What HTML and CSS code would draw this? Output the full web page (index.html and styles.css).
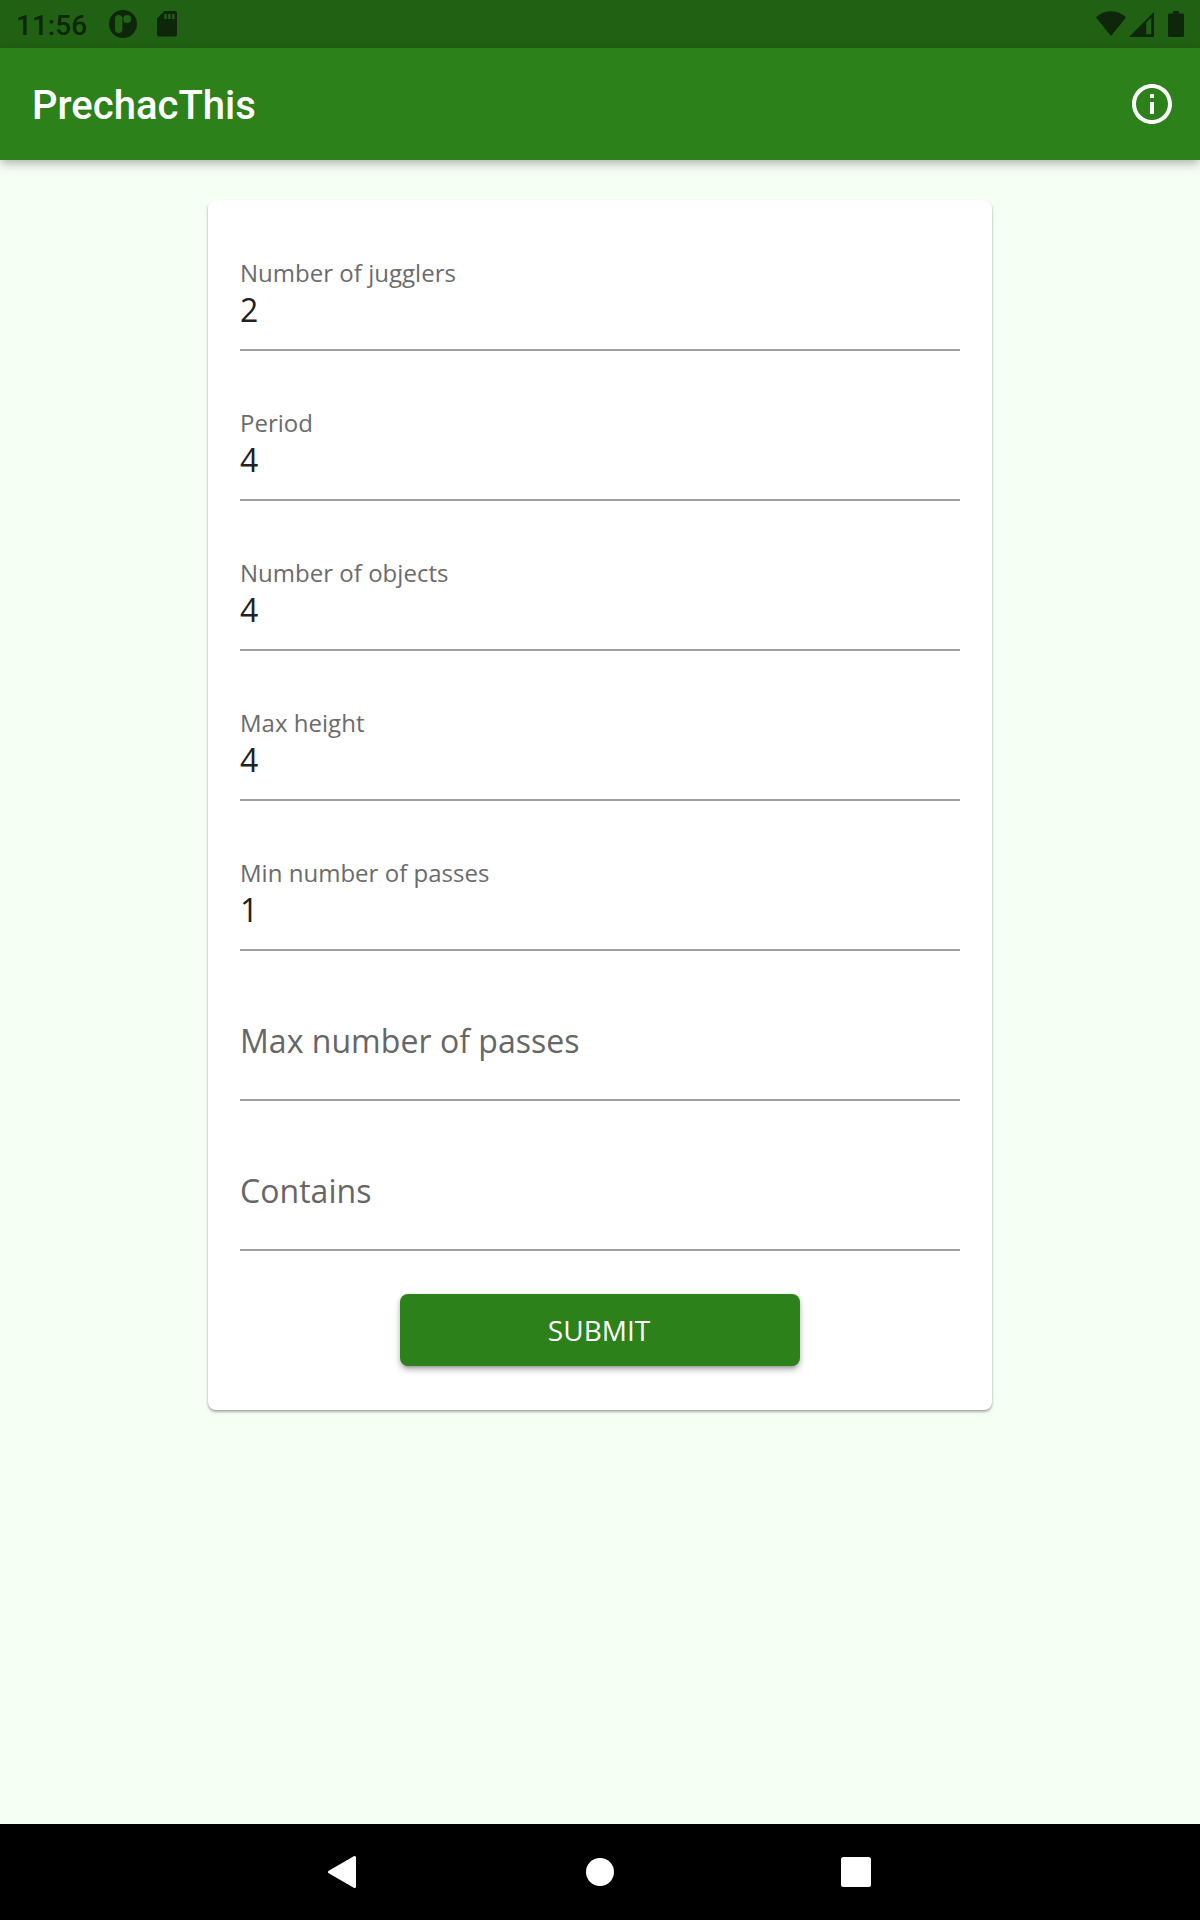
FILE: index.html
```html
<!DOCTYPE html>
<html lang="en">
<head>
<meta charset="utf-8">
<title>PrechacThis</title>
<link rel="stylesheet" href="styles.css">
</head>
<body>
<div class="screen">
  <div class="status-bar">
    <span class="clock">11:56</span>
    <svg class="status-app" width="28" height="28" viewBox="0 0 28 28"><path fill-rule="evenodd" d="M14 0a14 14 0 1 0 0 28a14 14 0 1 0 0-28zM9.700 5a3.700 3.700 0 0 0-3.700 3.700V19.300a3.700 3.700 0 0 0 7.400 0V8.700A3.700 3.700 0 0 0 9.700 5zM18.200 5a4 4 0 1 0 0 8a4 4 0 1 0 0-8z"/></svg>
    <svg class="status-sd" width="20" height="26" viewBox="0 0 20 26"><path fill-rule="evenodd" d="M7.500 0H18q2 0 2 2V23.500q0 2-2 2H2q-2 0-2-2V7.500zM7.300 3V8h2.400V3zM11.200 3V8h2.400V3zM15.100 3V8h2.400V3z"/></svg>
    <div class="status-right">
      <svg width="30" height="25" viewBox="0 0 30 25"><path d="M0 6.500C8-2 22-2 30 6.500L15 25z"/></svg>
      <svg class="status-cell" width="25" height="25" viewBox="0 0 25 25"><path fill-rule="evenodd" d="M25 0V25H0zM17.200 10.700V22.200H22.300V5.600z"/></svg>
      <svg class="status-battery" width="16" height="26" viewBox="0 0 16 26"><path d="M5 0h6v2.500h3.500q1.500 0 1.500 1.500V24.500q0 1.500-1.500 1.500h-13q-1.500 0-1.500-1.500V4q0-1.500 1.500-1.500H5z"/></svg>
    </div>
  </div>
  <header class="app-bar">
    <h1 class="title">PrechacThis</h1>
    <svg class="info" width="48" height="48" viewBox="0 0 24 24"><path d="M11 7h2v2h-2zm0 4h2v6h-2zm1-9C6.480 2 2 6.480 2 12s4.480 10 10 10 10-4.480 10-10S17.520 2 12 2zm0 18c-4.410 0-8-3.590-8-8s3.590-8 8-8 8 3.590 8 8-3.590 8-8 8z"/></svg>
  </header>
  <main class="content">
    <div class="card">
      <div class="field"><span class="label">Number of jugglers</span><span class="value">2</span></div>
      <div class="field"><span class="label">Period</span><span class="value">4</span></div>
      <div class="field"><span class="label">Number of objects</span><span class="value">4</span></div>
      <div class="field"><span class="label">Max height</span><span class="value">4</span></div>
      <div class="field"><span class="label">Min number of passes</span><span class="value">1</span></div>
      <div class="field field-empty"><span class="value">Max number of passes</span></div>
      <div class="field field-empty"><span class="value">Contains</span></div>
      <button class="submit" type="button">SUBMIT</button>
    </div>
  </main>
  <nav class="nav-bar">
    <svg width="32" height="36" viewBox="0 0 32 36"><path d="M3.500 18L28.500 3.500V32.500z" fill="#fff" stroke="#fff" stroke-width="3" stroke-linejoin="round"/></svg>
    <svg width="28" height="28" viewBox="0 0 28 28"><circle cx="14" cy="14" r="14" fill="#fff"/></svg>
    <svg width="30" height="30" viewBox="0 0 30 30"><rect width="30" height="30" rx="2.500" fill="#fff"/></svg>
  </nav>
</div>
</body>
</html>
```
FILE: styles.css
```css
* { box-sizing: border-box; }
body { margin: 0; }
svg { display: block; flex: none; }

.screen {
  display: flex;
  flex-direction: column;
  width: 1200px;
  height: 1920px;
  background: #f5fff4;
  font-family: "Open Sans", sans-serif;
}

.status-bar {
  display: flex;
  align-items: flex-start;
  height: 48px;
  padding: 0 16px;
  background: #216114;
  fill: #0e260a;
  color: #0e260a;
}
.clock {
  width: 93px;
  padding-top: 10px;
  font: 500 28px/32px Roboto, sans-serif;
}
.status-app { margin-top: 10px; }
.status-sd { margin: 11px 0 0 20px; }
.status-right {
  display: flex;
  margin: 11px 0 0 auto;
}
.status-cell { margin: 1px 0 0 3px; }
.status-battery { margin-left: 14px; }

.app-bar {
  display: flex;
  align-items: center;
  justify-content: space-between;
  height: 112px;
  padding: 0 24px 0 32px;
  background: #2c811a;
  box-shadow: 0 4px 8px -2px rgba(0, 0, 0, .16), 0 6px 12px rgba(0, 0, 0, .1), 0 2px 10px rgba(0, 0, 0, .08);
}
.title {
  margin: 0;
  padding-top: 3px;
  color: #fff;
  font: 500 40px/48px Roboto, sans-serif;
  letter-spacing: .02px;
}
.info { fill: #fff; }

.content { flex: 1; padding: 40px 208px 0; }
.card {
  display: flex;
  flex-direction: column;
  height: 1210px;
  padding: 1px 32px 0;
  border-radius: 8px;
  background: #fff;
  box-shadow: 0 2px 3px rgba(0, 0, 0, .3), 0 1px 2px rgba(0, 0, 0, .08);
}
.field {
  display: flex;
  flex-direction: column;
  justify-content: flex-end;
  height: 150px;
  padding-bottom: 17px;
  border-bottom: 2px solid #9e9e9e;
}
.label {
  margin-bottom: -1px;
  color: #6b6b6b;
  font-size: 24px;
  line-height: 32px;
  letter-spacing: .02px;
}
.value {
  color: #212121;
  font-size: 32px;
  line-height: 44px;
  letter-spacing: .04px;
}
.field-empty { padding-bottom: 36px; }
.field-empty .value { color: #666; }

.submit {
  align-self: center;
  width: 400px;
  height: 72px;
  margin-top: 43px;
  padding: 0 2px 0 0;
  border: 0;
  border-radius: 8px;
  background: #2c811a;
  color: #fff;
  font: 28px/38px "Open Sans", sans-serif;
  box-shadow: 0 6px 2px -4px rgba(0, 0, 0, .1), 0 4px 6px rgba(0, 0, 0, .25), 0 1px 4px rgba(0, 0, 0, .1);
}

.nav-bar {
  display: flex;
  align-items: center;
  justify-content: space-between;
  height: 96px;
  padding: 0 329px 0 326px;
  background: #000;
}
```
